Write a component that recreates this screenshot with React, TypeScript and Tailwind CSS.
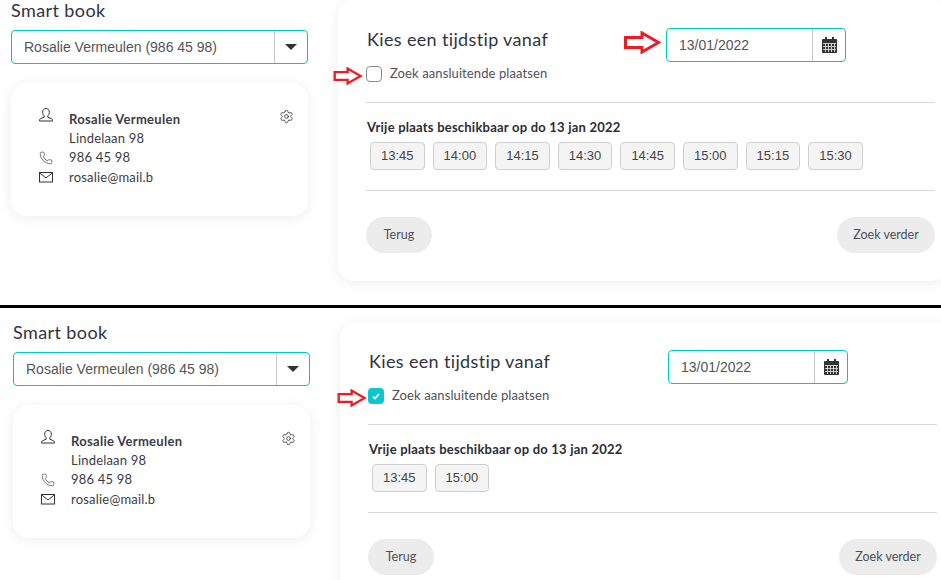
import { Phone, Settings } from 'lucide-react';

const TIMES_ALL = ['13:45', '14:00', '14:15', '14:30', '14:45', '15:00', '15:15', '15:30'];
const TIMES_LINKED = ['13:45', '15:00'];

const font = "font-['Lato','Noto_Sans',sans-serif]";

function RedArrow({ className }: { className: string }) {
  return (
    <svg className={className} width="37" height="23" viewBox="0 0 37 23" fill="#fff">
      <path d="M1.5 6.500 H18 V2 L34.500 11.500 L18 21 V16.500 H1.5 Z" stroke="#ed1c24" strokeWidth="3" />
    </svg>
  );
}

function UserIcon() {
  return (
    <svg width="14" height="14" viewBox="0 0 14 14" fill="none" stroke="#333" strokeWidth="1">
      <path d="M3.700 4.200C3.700 1.800 5.100.5 7 .5s3.300 1.300 3.300 3.700c0 1.700-.7 3-1.500 3.700v1.300l3.700 1.500c.7.300 1 .8 1 1.600v.7H.5v-.7c0-.8.300-1.300 1-1.600l3.700-1.500V7.900C4.400 7.200 3.700 5.900 3.700 4.200Z" />
    </svg>
  );
}

function MailIcon() {
  return (
    <svg width="14" height="11" viewBox="0 0 14 11" fill="none" stroke="#333" strokeWidth="1">
      <rect x=".5" y=".5" width="13" height="9.500" />
      <path d="M.5.800 7 6l6.500-5.200" />
    </svg>
  );
}

function CalendarIcon() {
  return (
    <svg width="15" height="16" viewBox="0 0 15 16">
      <rect x="3" y="0" width="2" height="4" fill="#333" />
      <rect x="10" y="0" width="2" height="4" fill="#333" />
      <rect x="0" y="2" width="15" height="14" rx="1" fill="#333" />
      <path d="M1 6.500h13M1 9.500h13M1 12.500h13M3.500 6v9M6.500 6v9M9.500 6v9M12.500 6v9" stroke="#fff" strokeWidth="1" opacity=".75" />
    </svg>
  );
}

function ContactRow({ icon, className, children }: { icon?: React.ReactNode; className?: string; children: React.ReactNode }) {
  return (
    <div className={`flex h-[19.250px] items-center text-[13px] tracking-[0.2px] text-[#3c3c46] ${className ?? ''}`}>
      <div className="flex w-[30px] shrink-0 items-center">{icon}</div>
      {children}
    </div>
  );
}

function Screen({ times, checked, dateArrow }: { times: string[]; checked?: boolean; dateArrow?: boolean }) {
  return (
    <div className={`flex items-start ${font}`}>
      {/* left column */}
      <div className="w-[297px] shrink-0">
        <h1 className="h-[22px] text-[18px] leading-[20px] tracking-[0.4px] text-[#33333d]">Smart book</h1>
        <div className="mt-2 flex h-[34px] items-stretch rounded border border-[#00c8c8] bg-white">
          <div className="flex flex-1 items-center pl-3 font-['Liberation_Sans',sans-serif] text-sm text-[#555]">
            Rosalie Vermeulen (986 45 98)
          </div>
          <div className="flex w-[33px] items-center justify-center border-l border-[#c8c8c8]">
            <div className="h-0 w-0 border-x-[6px] border-t-[6px] border-x-transparent border-t-[#333]" />
          </div>
        </div>
        <div className="relative mt-[19px] h-[133px] rounded-2xl bg-white pt-[27px] pl-7 shadow-[0_2px_14px_rgba(0,0,0,0.07)]">
          <Settings size={15} strokeWidth={1.3} color="#333" className="absolute top-[26px] right-[14px]" />
          <div className="relative">
            <div className="absolute -top-[2px] left-0">
              <UserIcon />
            </div>
            <ContactRow className="font-bold tracking-[0.3px] text-[#2c2c34]">Rosalie Vermeulen</ContactRow>
            <ContactRow>Lindelaan 98</ContactRow>
            <ContactRow icon={<Phone size={14} strokeWidth={1.1} color="#333" />}>986 45 98</ContactRow>
            <ContactRow icon={<MailIcon />}>rosalie@mail.b</ContactRow>
          </div>
        </div>
      </div>

      {/* right card */}
      <div className="ml-[30px] h-[281px] w-[610px] shrink-0 rounded-2xl bg-white pt-[28px] pl-[28px] shadow-[0_2px_14px_rgba(0,0,0,0.07)]">
        <div className="w-[569px]">
          <div className="flex items-start">
            <h2 className="ml-px w-[299px] text-[18px] leading-[22px] tracking-[0.35px] text-[#33333d]">Kies een tijdstip vanaf</h2>
            <div className="relative flex h-[34px] w-[180px] items-stretch rounded border border-[#00c8c8] bg-white">
              {dateArrow && <RedArrow className="absolute top-[2px] -left-[43px]" />}
              <div className="flex flex-1 items-center pl-3 font-['Liberation_Sans',sans-serif] text-sm text-[#555]">
                13/01/2022
              </div>
              <div className="flex w-[33px] items-center justify-center border-l border-[#c8c8c8]">
                <CalendarIcon />
              </div>
            </div>
          </div>

          <div className="relative mt-1 flex h-4 items-center">
            <RedArrow className={`absolute top-[1px] h-[18px] w-[30px] ${checked ? '-left-[31px]' : '-left-[33px]'}`} />
            {checked ? (
              <div className="flex h-4 w-4 items-center justify-center rounded bg-[#0cc5cd]">
                <svg width="8" height="7" viewBox="0 0 8 7" fill="none" stroke="#fff" strokeWidth="1.800">
                  <path d="M1 3.500 3 5.500 7 1" />
                </svg>
              </div>
            ) : (
              <div className="h-4 w-4 rounded border border-[#8c8c8c] bg-white" />
            )}
            <span className="ml-2 text-[13px] tracking-[0.1px] text-[#50505a]">Zoek aansluitende plaatsen</span>
          </div>

          <hr className="mt-5 border-[#d8d8d8]" />

          <p className="mt-[16px] ml-px h-4 text-[13px] leading-4 font-bold tracking-[0.22px] text-[#2c2c34]">
            Vrije plaats beschikbaar op do 13 jan 2022
          </p>
          <div className="mt-[7px] ml-1 flex h-7 gap-2">
            {times.map(time => (
              <button
                key={time}
                type="button"
                className="h-7 w-[54.600px] rounded border border-[#cfcfcf] bg-[#f4f4f4] font-['Liberation_Sans',sans-serif] text-[13px] text-[#444]"
              >
                {time}
              </button>
            ))}
          </div>

          <hr className="mt-5 border-[#d8d8d8]" />

          <div className="mt-[26px] flex justify-between">
            <button type="button" className="h-9 w-[66px] rounded-[18px] bg-[#ececec] text-[12.500px] text-[#50505a]">
              Terug
            </button>
            <button type="button" className="h-9 w-[98px] rounded-[18px] bg-[#ececec] text-[12.500px] text-[#50505a]">
              Zoek verder
            </button>
          </div>
        </div>
      </div>
    </div>
  );
}

export default function App() {
  return (
    <div className="h-[580px] w-[941px] overflow-hidden bg-white">
      <div className="h-[305px] overflow-hidden pl-[11px]">
        <Screen times={TIMES_ALL} dateArrow />
      </div>
      <div className="h-[3px] bg-black" />
      <div className="h-[272px] overflow-hidden pt-[14px] pl-[13px]">
        <Screen times={TIMES_LINKED} checked />
      </div>
    </div>
  );
}
